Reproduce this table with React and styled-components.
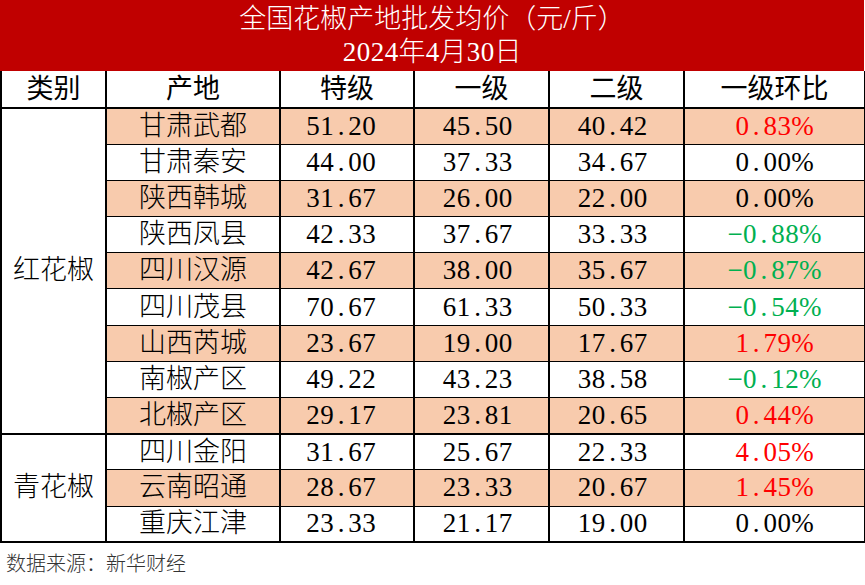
import React from 'react';
import styled, { createGlobalStyle } from 'styled-components';

const GlobalStyle = createGlobalStyle`
  html, body {
    margin: 0;
    padding: 0;
    background: #ffffff;
  }
  body {
    font-family: "Liberation Serif", "Noto Sans CJK SC", serif;
  }
`;

const Page = styled.div`
  width: 865px;
  height: 585px;
  background: #ffffff;
  overflow: hidden;
`;

const TitleBar = styled.div`
  width: 864px;
  height: 71px;
  background: #c00000;
  color: #ffffff;
  display: flex;
  flex-direction: column;
  align-items: center;
  justify-content: center;
  font-size: 27px;
  font-weight: 300;
  line-height: 33px;
`;

const Table = styled.table`
  width: 864px;
  border-collapse: collapse;
  table-layout: fixed;
  font-size: 27px;
`;

const HeadCell = styled.th`
  height: 36px;
  padding: 0;
  font-weight: 400;
  text-align: center;
  vertical-align: middle;
  color: #000000;
  border-left: 2px solid #000;
  border-right: 2px solid #000;
  border-bottom: 2px solid #000;
  line-height: 1;
`;

const Row = styled.tr`
  height: 36.2px;
`;

const Cell = styled.td`
  padding: 0 ${p => (p.$shift ? p.$shift : 0)}px 0 0;
  text-align: center;
  vertical-align: middle;
  font-weight: 300;
  line-height: 1;
  color: ${p => p.$color || '#000000'};
  background: ${p => (p.$shaded ? '#f8cbad' : '#ffffff')};
  border-left: 2px solid #000;
  border-right: 2px solid #000;
  border-bottom: ${p => (p.$thick ? 2 : 1)}px solid #000;
`;

const GroupCell = styled(Cell)`
  border-bottom: 2px solid #000;
`;

const Digit = styled.span`
  display: inline-block;
  width: 0.52em;
  text-align: center;
`;

const Source = styled.div`
  padding: 5px 0 0 6px;
  font-size: 20px;
  font-weight: 300;
  color: #333333;
  font-family: "Noto Sans CJK SC", sans-serif;
`;

const Num = ({ value }) => (
  <span>
    {value.split('').map((ch, i) =>
      /[0-9.]/.test(ch) ? <Digit key={i}>{ch}</Digit> : <span key={i}>{ch}</span>
    )}
  </span>
);

const RED = '#ff0000';
const GREEN = '#00b050';

const groups = [
  {
    name: '红花椒',
    rows: [
      ['甘肃武都', '51.20', '45.50', '40.42', '0.83%'],
      ['甘肃秦安', '44.00', '37.33', '34.67', '0.00%'],
      ['陕西韩城', '31.67', '26.00', '22.00', '0.00%'],
      ['陕西凤县', '42.33', '37.67', '33.33', '−0.88%'],
      ['四川汉源', '42.67', '38.00', '35.67', '−0.87%'],
      ['四川茂县', '70.67', '61.33', '50.33', '−0.54%'],
      ['山西芮城', '23.67', '19.00', '17.67', '1.79%'],
      ['南椒产区', '49.22', '43.23', '38.58', '−0.12%'],
      ['北椒产区', '29.17', '23.81', '20.65', '0.44%'],
    ],
  },
  {
    name: '青花椒',
    rows: [
      ['四川金阳', '31.67', '25.67', '22.33', '4.05%'],
      ['云南昭通', '28.67', '23.33', '20.67', '1.45%'],
      ['重庆江津', '23.33', '21.17', '19.00', '0.00%'],
    ],
  },
];

const pctColor = v => {
  if (v.startsWith('−')) return GREEN;
  if (v === '0.00%') return '#000000';
  return RED;
};

const App = () => {
  let index = 0;
  return (
    <Page>
      <GlobalStyle />
      <TitleBar>
        <div>全国花椒产地批发均价（元/斤）</div>
        <div><Num value="2024" />年<Num value="4" />月<Num value="30" />日</div>
      </TitleBar>
      <Table>
        <colgroup>
          <col style={{ width: 105 }} />
          <col style={{ width: 174 }} />
          <col style={{ width: 134 }} />
          <col style={{ width: 135 }} />
          <col style={{ width: 135 }} />
          <col style={{ width: 181 }} />
        </colgroup>
        <thead>
          <tr>
            <HeadCell>类别</HeadCell>
            <HeadCell>产地</HeadCell>
            <HeadCell>特级</HeadCell>
            <HeadCell>一级</HeadCell>
            <HeadCell>二级</HeadCell>
            <HeadCell>一级环比</HeadCell>
          </tr>
        </thead>
        <tbody>
          {groups.map(group =>
            group.rows.map((r, i) => {
              index += 1;
              const shaded = index % 2 === 1;
              const last = i === group.rows.length - 1;
              return (
                <Row key={r[0]}>
                  {i === 0 && (
                    <GroupCell rowSpan={group.rows.length}>{group.name}</GroupCell>
                  )}
                  <Cell $shaded={shaded} $thick={last}>{r[0]}</Cell>
                  <Cell $shaded={shaded} $thick={last} $shift={12}><Num value={r[1]} /></Cell>
                  <Cell $shaded={shaded} $thick={last} $shift={8}><Num value={r[2]} /></Cell>
                  <Cell $shaded={shaded} $thick={last} $shift={8}><Num value={r[3]} /></Cell>
                  <Cell $shaded={shaded} $thick={last} $color={pctColor(r[4])}><Num value={r[4]} /></Cell>
                </Row>
              );
            })
          )}
        </tbody>
      </Table>
      <Source>数据来源：新华财经</Source>
    </Page>
  );
};

export default App;
